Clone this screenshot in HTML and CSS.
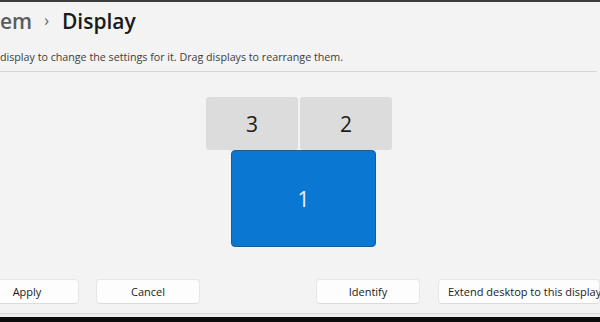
FILE: index.html
```html
<!DOCTYPE html>
<html lang="en">
<head>
    <meta charset="UTF-8">
    <meta name="viewport" content="width=device-width, initial-scale=1.0">
    <title>Display</title>
    <link rel="stylesheet" href="styles.css">
</head>
<body>
    <div class="window">
        <div class="header">
            <div class="breadcrumb">
                <span class="crumb-parent">em</span>
                <span class="crumb-sep">&#8250;</span>
                <span class="crumb-current">Display</span>
            </div>
            <div class="hint">display to change the settings for it. Drag displays to rearrange them.</div>
        </div>

        <div class="canvas">
            <div class="monitor monitor-3">3</div>
            <div class="monitor monitor-2">2</div>
            <div class="monitor monitor-1 active">1</div>
        </div>

        <div class="actions">
            <div class="group group-left">
                <button class="btn btn-apply">Apply</button>
                <button class="btn">Cancel</button>
            </div>
            <div class="group group-right">
                <button class="btn">Identify</button>
                <button class="btn btn-wide">Extend desktop to this display</button>
            </div>
        </div>

        <div class="taskbar-edge"></div>
    </div>
</body>
</html>
```

FILE: styles.css
```css
* {
    margin: 0;
    padding: 0;
    box-sizing: border-box;
}
html, body {
    height: 100%;
    overflow: hidden;
}
body {
    background: #f3f3f3;
    color: #1b1b1b;
    font-family: 'Open Sans', 'Noto Sans', sans-serif;
}
.window {
    height: 100%;
    display: flex;
    flex-direction: column;
    border-top: 2px solid #3c3c3c;
}
.header {
    border-bottom: 1px solid #d6d6d6;
    margin-right: 3px;
    padding-bottom: 7px;
}
.breadcrumb {
    display: flex;
    align-items: baseline;
    height: 40px;
    padding-top: 5px;
    font-size: 21px;
    font-weight: 600;
    white-space: nowrap;
}
.crumb-parent {
    color: #5c5c5c;
}
.crumb-sep {
    color: #5e5e5e;
    font-size: 16px;
    font-weight: 400;
    margin: 0 13px 0 12px;
    position: relative;
    top: -3px; /* chevron sits a little above baseline */
}
.crumb-current {
    color: #1a1a1a;
}
.hint {
    font-size: 10.7px;
    color: #3d3d3d;
    padding-top: 8px;
    white-space: nowrap;
}
.canvas {
    position: relative;
    height: 206px;
}
.monitor {
    position: absolute;
    display: flex;
    align-items: center;
    justify-content: center;
    background: #dcdcdc;
    border-radius: 3px;
    font-size: 21px;
    color: #1c1c1c;
}
.monitor-3 {
    left: 206px;
    top: 25px;
    width: 92px;
    height: 53px;
}
.monitor-2 {
    left: 300px;
    top: 25px;
    width: 92px;
    height: 53px;
}
.monitor-1 {
    left: 231px;
    top: 78px;
    width: 145px;
    height: 97px;
}
.monitor.active {
    background: #0a78d2;
    border: 1px solid #1d5b92;
    border-radius: 4px;
    color: #eaf3fc;
}
.actions {
    display: flex;
    align-items: center;
    height: 26px;
    white-space: nowrap;
}
.group {
    display: flex;
    gap: 17px;
}
.group-right {
    margin-left: 116px;
    gap: 18px;
}
.btn {
    font-family: 'Open Sans', 'Noto Sans', sans-serif;
    font-size: 11px;
    color: #1b1b1b;
    background: #fdfdfd;
    border: 1px solid #e7e7e7;
    border-bottom-color: #dcdcdc;
    border-radius: 4px;
    height: 25px;
    width: 104px;
    flex-shrink: 0;
}
.btn-apply {
    margin-left: -25px;
}
.btn-wide {
    width: 162px;
    text-align: left;
    padding-left: 9px;
}
.taskbar-edge {
    margin-top: auto;
    height: 9px;
    border-top: 1px solid #d9d9d9;
    border-bottom: 5px solid #0d0d0d;
    background: #efefef;
}
```
